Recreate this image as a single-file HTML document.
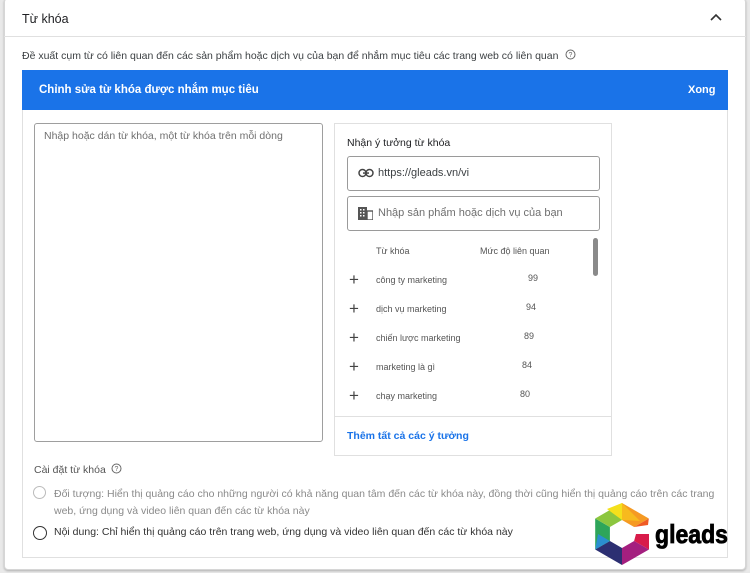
<!DOCTYPE html>
<html><head><meta charset="utf-8"><style>
*{box-sizing:border-box;margin:0;padding:0}
body{width:750px;height:573px;background:#e9e9e9;font-family:"Liberation Sans","Noto Sans CJK SC",sans-serif;position:relative;overflow:hidden;color:#3c4043}
.card{position:absolute;left:4px;top:-2px;width:742px;height:572px;background:#fff;border:1px solid #d6d6d6;border-radius:4px;box-shadow:0 1px 2px rgba(0,0,0,.25)}
.abs{position:absolute}
.hdr{left:22px;top:12px;font-size:12.5px;color:#202124}
.sep{left:4px;top:36px;width:742px;height:1px;background:#e0e0e0}
.desc{left:22px;top:49px;font-size:10.5px;color:#3c4043}
.inner{left:22px;top:70px;width:706px;height:488px;border:1px solid #e0e0e0;border-top:none}
.blue{left:22px;top:70px;width:706px;height:40px;background:#1a73e8;color:#fff;font-weight:bold;font-size:11.5px}
.ta{left:34px;top:123px;width:289px;height:319px;border:1px solid #9e9e9e;border-radius:3px;font-size:10.5px;color:#6f6f6f;padding:6px 9px}
.rp{left:334px;top:123px;width:278px;height:333px;border:1px solid #e0e0e0}
.inp{position:absolute;left:12px;width:253px;height:35px;border:1px solid #9a9a9a;border-radius:3px;font-size:11px;padding:10px 0 0 30px}
.row{position:absolute;left:0;font-size:9px;color:#555}
.plus{position:absolute;left:14px;font-size:17px;color:#444;line-height:10px}
</style></head><body>
<div class="card"></div>
<div class="abs hdr">Từ khóa</div>
<svg class="abs" style="left:709px;top:12px" width="14" height="10"><path d="M2 8 L7 3 L12 8" fill="none" stroke="#333" stroke-width="1.6"/></svg>
<div class="abs sep"></div>
<div class="abs desc">Đề xuất cụm từ có liên quan đến các sản phẩm hoặc dịch vụ của bạn để nhắm mục tiêu các trang web có liên quan
<svg width="11" height="11" style="vertical-align:-1px;margin-left:4px"><circle cx="5.5" cy="5.5" r="4.5" fill="none" stroke="#666" stroke-width="1"/><text x="5.5" y="8" font-size="7" text-anchor="middle" fill="#666" font-family="Liberation Sans">?</text></svg></div>
<div class="abs inner"></div>
<div class="abs blue"><span style="position:absolute;left:17px;top:14px">Chỉnh sửa từ khóa được nhắm mục tiêu</span><span style="position:absolute;left:666px;top:14px;font-size:11px">Xong</span></div>
<div class="abs ta">Nhập hoặc dán từ khóa, một từ khóa trên mỗi dòng</div>
<div class="abs rp">
 <div style="position:absolute;left:12px;top:13px;font-size:10.5px;color:#202124">Nhận ý tưởng từ khóa</div>
 <div class="inp" style="top:32px;color:#3c4043">https://gleads.vn/vi
  <svg style="position:absolute;left:10px;top:11px" width="16" height="10"><rect x="1" y="1.5" width="7" height="7" rx="3.5" fill="none" stroke="#444" stroke-width="1.5"/><rect x="8" y="1.5" width="7" height="7" rx="3.5" fill="none" stroke="#444" stroke-width="1.5"/><rect x="5" y="4.3" width="6" height="1.5" fill="#444"/></svg></div>
 <div class="inp" style="top:72px;color:#6f6f6f">Nhập sản phẩm hoặc dịch vụ của bạn
  <svg style="position:absolute;left:10px;top:10px" width="15" height="13"><rect x="0" y="0" width="9" height="13" fill="#555"/><rect x="9" y="4" width="6" height="9" fill="none" stroke="#555" stroke-width="1.4"/><g fill="#fff"><rect x="2" y="2" width="1.5" height="1.5"/><rect x="5" y="2" width="1.5" height="1.5"/><rect x="2" y="5" width="1.5" height="1.5"/><rect x="5" y="5" width="1.5" height="1.5"/><rect x="2" y="8" width="1.5" height="1.5"/><rect x="5" y="8" width="1.5" height="1.5"/></g></svg></div>
 <div class="row" style="top:122px;left:41px">Từ khóa</div>
 <div class="row" style="top:122px;left:145px">Mức độ liên quan</div>
 <div style="position:absolute;left:258px;top:114px;width:5px;height:38px;border-radius:3px;background:#8a8a8a"></div>
 <div class="plus" style="top:151px">+</div><div class="row" style="top:151px;left:41px">công ty marketing</div><div class="row" style="top:149px;left:193px">99</div>
 <div class="plus" style="top:180px">+</div><div class="row" style="top:180px;left:41px">dịch vụ marketing</div><div class="row" style="top:178px;left:191px">94</div>
 <div class="plus" style="top:209px">+</div><div class="row" style="top:209px;left:41px">chiến lược marketing</div><div class="row" style="top:207px;left:189px">89</div>
 <div class="plus" style="top:238px">+</div><div class="row" style="top:238px;left:41px">marketing là gì</div><div class="row" style="top:236px;left:187px">84</div>
 <div class="plus" style="top:267px">+</div><div class="row" style="top:267px;left:41px">chạy marketing</div><div class="row" style="top:265px;left:185px">80</div>
 <div style="position:absolute;left:0;top:292px;width:276px;height:1px;background:#e0e0e0"></div>
 <div style="position:absolute;left:12px;top:306px;font-size:10.5px;color:#1a73e8;font-weight:bold">Thêm tất cả các ý tưởng</div>
</div>
<div class="abs" style="left:34px;top:463px;font-size:10.5px;color:#555">Cài đặt từ khóa <svg width="11" height="11" style="vertical-align:-1px;margin-left:2px"><circle cx="5.5" cy="5.5" r="4.5" fill="none" stroke="#666"/><text x="5.5" y="8" font-size="7" text-anchor="middle" fill="#666" font-family="Liberation Sans">?</text></svg></div>
<div class="abs" style="left:33px;top:486px;width:13px;height:13px;border:1.5px solid #bbb;border-radius:50%"></div>
<div class="abs" style="left:54px;top:486px;width:672px;font-size:10.5px;line-height:17px;color:#8a8a8a">Đối tượng: Hiển thị quảng cáo cho những người có khả năng quan tâm đến các từ khóa này, đồng thời cũng hiển thị quảng cáo trên các trang web, ứng dụng và video liên quan đến các từ khóa này</div>
<div class="abs" style="left:33px;top:526px;width:14px;height:14px;border:1.8px solid #333;border-radius:50%"></div>
<div class="abs" style="left:54px;top:526px;font-size:10.5px;color:#333">Nội dung: Chỉ hiển thị quảng cáo trên trang web, ứng dụng và video liên quan đến các từ khóa này</div>
<svg class="abs" style="left:0;top:0" width="750" height="573">
<polygon points="622,503 648.8,518.5 634.1,527 622,520" fill="#f59a23"/>
<polygon points="622,503 622,520 640,521" fill="#f7c21d" opacity=".8"/>
<polygon points="648.8,518.5 634.1,527 648,525" fill="#ef5a24"/>
<polygon points="636,534 649,534 649,549.5 634.1,541" fill="#d81b4a"/>
<polygon points="649,549.5 622,565 622,548 634.1,541" fill="#a41f7f"/>
<polygon points="622,565 595.2,549.5 609.9,541 622,548" fill="#2c2f72"/>
<polygon points="595.2,549.5 595.2,518.5 609.9,527 609.9,541" fill="#2ea55a"/>
<polygon points="595.2,549.5 609.9,541 598,534" fill="#2a8fd0"/>
<polygon points="595.2,518.5 622,503 622,520 609.9,527" fill="#8cc63f"/>
<polygon points="607,509 622,503 622,520" fill="#f4e01c"/>
<text x="655" y="543" font-family="Liberation Sans" font-weight="bold" font-size="26" fill="#000" textLength="73" lengthAdjust="spacingAndGlyphs" stroke="#000" stroke-width="0.8">gleads</text>
</svg>
</body></html>
